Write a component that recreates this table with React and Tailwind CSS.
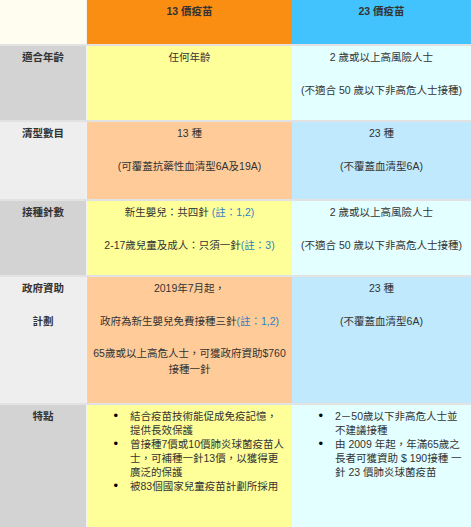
const font = { fontFamily: '"Liberation Sans", "Noto Sans CJK TC", Arial, sans-serif' };

const Note = ({ children }) => <span className="text-[#2f7fc1]">{children}</span>;

function Cell({ className = "", children }) {
  return (
    <div className={`pt-[3px] px-1 text-center leading-[16.3px] ${className}`}>{children}</div>
  );
}

function Bullets({ items, className = "" }) {
  return (
    <ul className={`pt-[4px] leading-[14px] ${className}`}>
      {items.map((t, i) => (
        <li key={i} className="flex">
          <span className="w-[43px] shrink-0 pr-[12px] text-right text-[13px] text-black">•</span>
          <span>{t}</span>
        </li>
      ))}
    </ul>
  );
}

const rows = [
  {
    label: "適合年齡",
    h: "h-[74px]",
    odd: true,
    a: <>任何年齡</>,
    b: (
      <>
        2 歲或以上高風險人士
        <br />
        <br />
        (不適合 50 歲以下非高危人士接種)
      </>
    ),
  },
  {
    label: "清型數目",
    h: "h-[77px]",
    odd: false,
    a: (
      <>
        13 種
        <br />
        <br />
        (可覆蓋抗藥性血清型6A及19A)
      </>
    ),
    b: (
      <>
        23 種
        <br />
        <br />
        (不覆蓋血清型6A)
      </>
    ),
  },
  {
    label: "接種針數",
    h: "h-[74px]",
    odd: true,
    a: (
      <>
        新生嬰兒：共四針 <Note>(註：1,2)</Note>
        <br />
        <br />
        2-17歲兒童及成人：只須一針<Note>(註：3)</Note>
      </>
    ),
    b: (
      <>
        2 歲或以上高風險人士
        <br />
        <br />
        (不適合 50 歲以下非高危人士接種)
      </>
    ),
  },
  {
    label: (
      <>
        政府資助
        <br />
        <br />
        計劃
      </>
    ),
    h: "h-[126px]",
    odd: false,
    a: (
      <>
        2019年7月起，
        <br />
        <br />
        政府為新生嬰兒免費接種三針<Note>(註：1,2)</Note>
        <br />
        <br />
        65歲或以上高危人士，可獲政府資助$760
        <br />
        接種一針
      </>
    ),
    b: (
      <>
        23 種
        <br />
        <br />
        (不覆蓋血清型6A)
      </>
    ),
  },
];

export default function App() {
  return (
    <div className="w-[471px] h-[527px] overflow-hidden bg-white text-[10.5px] text-[#333]" style={font}>
      {/* header */}
      <div className="flex h-[46px] border-b-2 border-[#e2e2e2]">
        <div className="w-[87px] shrink-0 bg-[#fffdf0] border-r border-[#f2f2f2]" />
        <div className="w-[205px] shrink-0 bg-[#f98e13] pt-[4px] text-center font-bold">13 價疫苗</div>
        <div className="flex-1 bg-[#43c3fd] pt-[4px] text-center font-bold">23 價疫苗</div>
      </div>

      {rows.map((r, i) => (
        <div key={i} className={`flex ${r.h} box-content border-b-2 border-[#e2e2e2]`}>
          <Cell className={`w-[87px] shrink-0 font-bold border-r border-[#f2f2f2] ${r.odd ? "bg-[#d3d3d3]" : "bg-[#eeeeee]"}`}>
            {r.label}
          </Cell>
          <Cell className={`w-[205px] shrink-0 ${r.odd ? "bg-[#ffff99]" : "bg-[#ffcc99]"}`}>{r.a}</Cell>
          <Cell className={`flex-1 ${r.odd ? "bg-[#e3ffff]" : "bg-[#c0e9fe]"}`}>{r.b}</Cell>
        </div>
      ))}

      {/* features */}
      <div className="flex h-[130px]">
        <Cell className="w-[87px] shrink-0 font-bold border-r border-[#f2f2f2] bg-[#d3d3d3]">特點</Cell>
        <div className="w-[205px] shrink-0 bg-[#ffff99] pr-[6px]">
          <Bullets
            items={[
              "結合疫苗技術能促成免疫記憶，提供長效保護",
              "曾接種7價或10價肺炎球菌疫苗人士，可補種一針13價，以獲得更廣泛的保護",
              "被83個國家兒童疫苗計劃所採用",
            ]}
          />
        </div>
        <div className="flex-1 bg-[#e3ffff] pr-[8px]">
          <Bullets
            items={[
              "2－50歲以下非高危人士並不建議接種",
              "由 2009 年起，年滿65歲之長者可獲資助 $ 190接種 一針 23 價肺炎球菌疫苗",
            ]}
          />
        </div>
      </div>
    </div>
  );
}
